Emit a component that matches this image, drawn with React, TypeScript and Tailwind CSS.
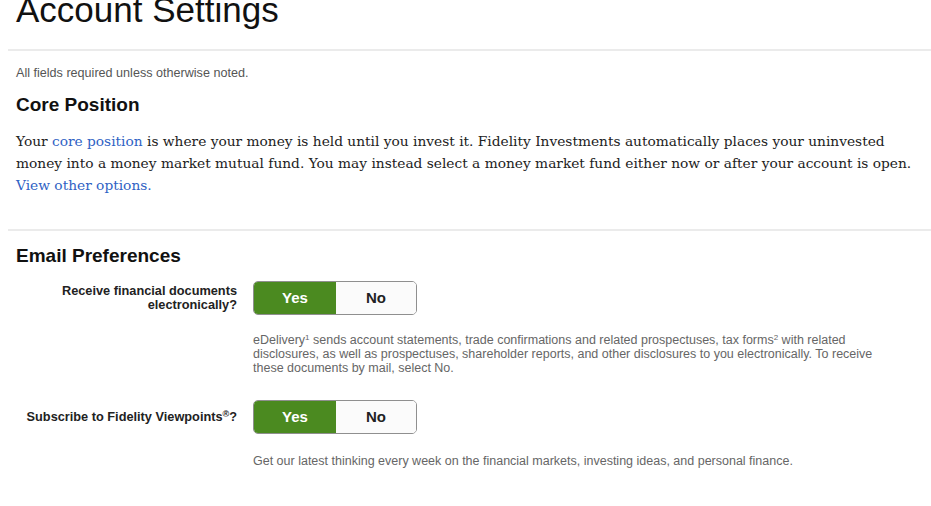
import React from "react";

function Toggle() {
  return (
    <div className="flex h-[34px] w-[164px] overflow-hidden rounded-[5px] border border-[#8f8f8f]">
      <div className="flex w-[82px] items-center justify-center bg-[#4b8a20] text-[15px] font-bold text-white">
        Yes
      </div>
      <div className="flex flex-1 items-center justify-center bg-[#fbfbfb] text-[15px] font-bold text-[#222]">
        No
      </div>
    </div>
  );
}

export default function App() {
  return (
    <div
      className="min-h-[506px] w-[931px] overflow-hidden bg-white pl-2 text-[#111]"
      style={{ fontFamily: '"Liberation Sans", Arial, sans-serif' }}
    >
      <h1 className="mt-[-8px] mb-[22px] pl-2 text-[35px] leading-[35px] font-normal text-[#111]">
        Account Settings
      </h1>
      <div className="h-[2px] bg-[#ebebeb]" />
      <div className="pl-2">
        <p className="mt-[15px] text-[12.6px] leading-[14px] text-[#555]">
          All fields required unless otherwise noted.
        </p>
        <h2 className="mt-[14px] text-[19px] leading-[22px] font-bold text-[#111]">Core Position</h2>
        <p
          className="mt-[14px] text-[13.75px] leading-[22px] text-[#222]"
          style={{ fontFamily: '"DejaVu Serif", Georgia, serif' }}
        >
          Your <span className="text-[#2f62c4]">core position</span> is where your money is held until you invest it. Fidelity Investments automatically places your uninvested
          <br />
          money into a money market mutual fund. You may instead select a money market fund either now or after your account is open.
          <br />
          <span className="text-[#2f62c4]">View other options.</span>
        </p>
      </div>
      <div className="mt-[33px] h-[2px] bg-[#ebebeb]" />
      <div className="pl-2 pr-2">
        <h2 className="mt-[14px] text-[19px] leading-[22px] font-bold text-[#111]">Email Preferences</h2>

        <div className="mt-[14px] flex items-center gap-4">
          <div className="w-[221px] text-right text-[12.75px] leading-[14px] font-bold text-[#222]">
            Receive financial documents
            <br />
            electronically?
          </div>
          <Toggle />
        </div>
        <p className="mt-[18px] ml-[237px] w-[632px] text-[12.5px] leading-[14px] text-[#666]">
          eDelivery<sup className="text-[8px]">1</sup> sends account statements, trade confirmations and related prospectuses, tax forms<sup className="text-[8px]">2</sup> with related disclosures, as well as prospectuses, shareholder reports, and other disclosures to you electronically. To receive these documents by mail, select No.
        </p>

        <div className="mt-[25px] flex items-center gap-4">
          <div className="w-[221px] text-right text-[12.75px] leading-[14px] font-bold text-[#222]">
            Subscribe to Fidelity Viewpoints<sup className="text-[9px]">®</sup>?
          </div>
          <Toggle />
        </div>
        <p className="mt-[20px] ml-[237px] text-[12.5px] leading-[14px] text-[#666]">
          Get our latest thinking every week on the financial markets, investing ideas, and personal finance.
        </p>
      </div>
    </div>
  );
}
